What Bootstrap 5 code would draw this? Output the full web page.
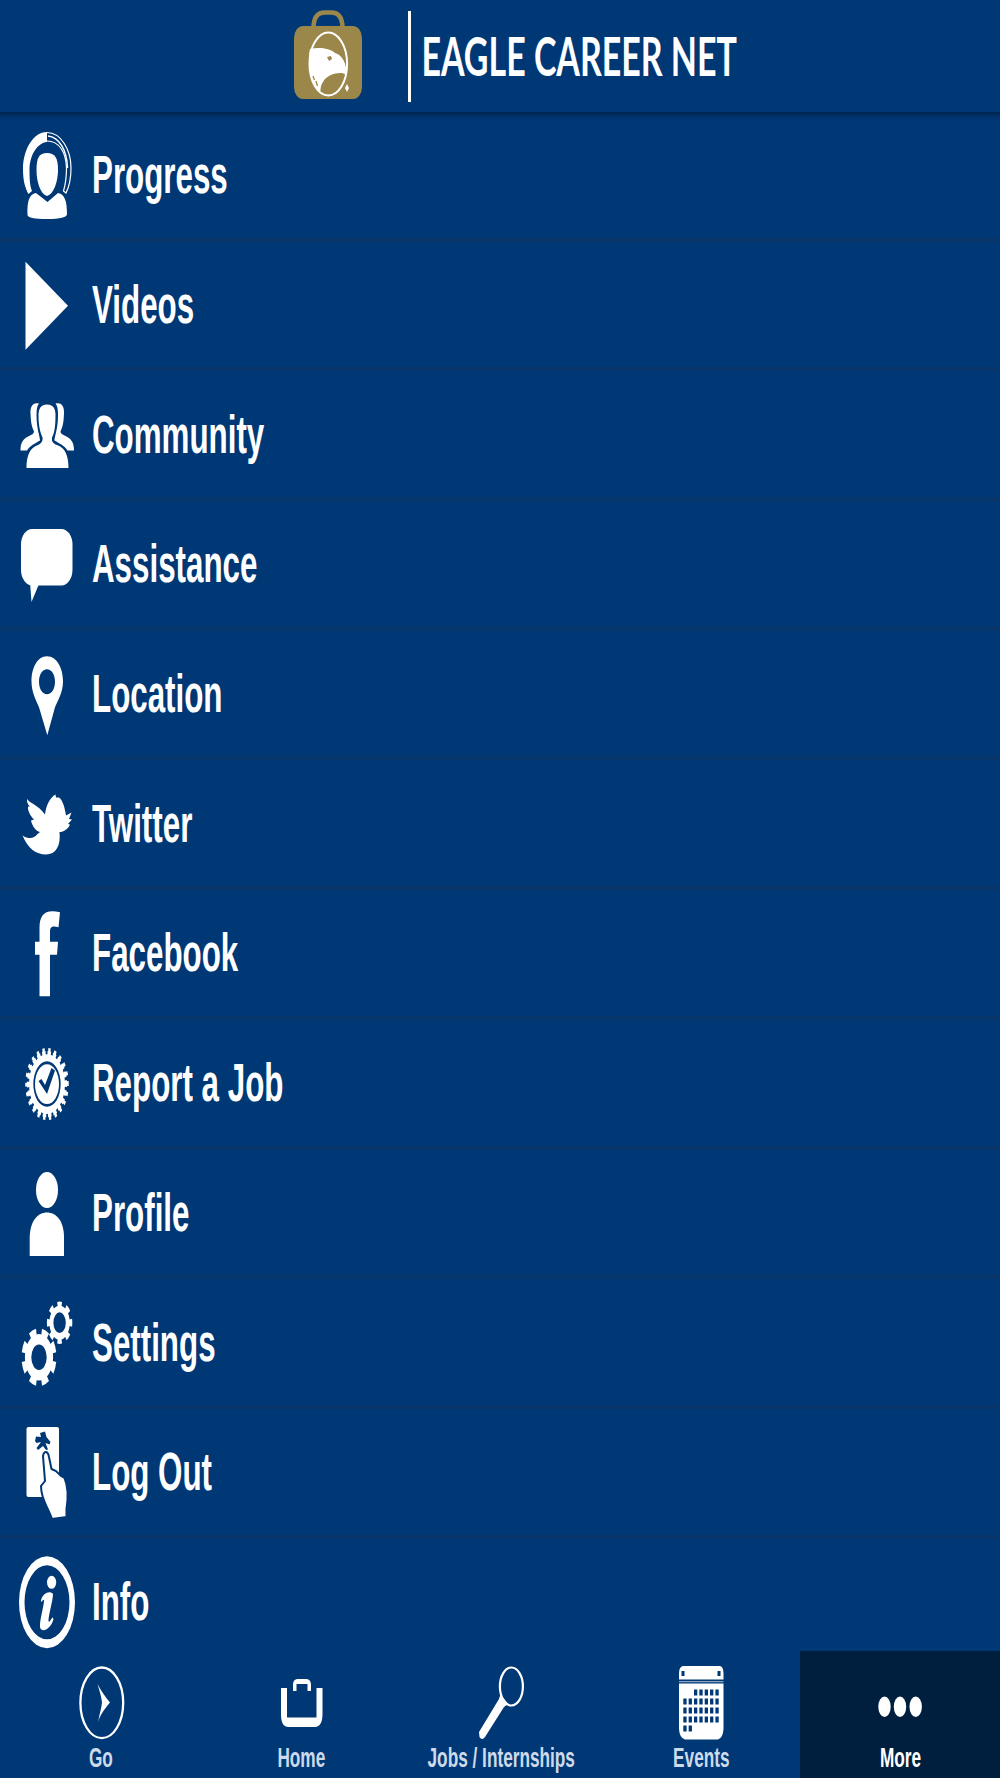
<!DOCTYPE html>
<html lang="en">
<head>
<meta charset="utf-8">
<meta name="viewport" content="width=device-width, initial-scale=1">
<title>Eagle Career Net</title>
<link href="https://cdn.jsdelivr.net/npm/bootstrap@5.3.0/dist/css/bootstrap.min.css" rel="stylesheet">
<style>
:root{--navy:#003876;--line:#08366b;--deep:#001f3f}
body{background:var(--navy);color:#fff;font-family:"Liberation Sans",Arial,sans-serif;font-weight:700}
svg{fill:#fff;flex:none;display:block}
.app-header{height:112px;padding-left:32px;background:var(--navy);box-shadow:0 1px 5px 2px #00234b;z-index:2}
.menu-row{height:129.7px;flex:none;padding:0 0 1px 16px;gap:15.5px;background:transparent;color:#fff;border:0 solid var(--line);border-radius:0}
.list-group .menu-row{border-width:0 0 4px}
.list-group .menu-row:last-child{border-width:0;padding-bottom:5px}
.menu-text{font-size:54px;line-height:1;white-space:nowrap;transform:scaleX(.58);transform-origin:left}
.tab-bar{height:127px;background:var(--navy);z-index:2}
.tab-bar .nav-link{width:200px;padding:8px 0 0;border-radius:0;color:#cddaea}
.tab-bar .nav-link.active{background:var(--deep);color:#fff}
.tab-text{font-size:28px;line-height:28px;padding:1px 0 0 3px;white-space:nowrap;transform:scaleX(.615)}
.active .tab-text{padding-left:0}
.ink{fill:var(--navy)}
.thin{fill:none;stroke:#fff}
</style>
</head>
<body>
<div class="vh-100 d-flex flex-column overflow-hidden">
<header class="app-header d-flex justify-content-center flex-shrink-0 position-relative">
<svg width="452" height="112" viewBox="290 0 452 112" role="img">
<path d="M313.500 28 C313.500 17 318 12.500 325 12.500 H331 C338 12.500 342.500 17 342.500 28" fill="none" stroke="#9c874b" stroke-width="4.500"/>
<rect x="294" y="26" width="68" height="73" rx="9" ry="12" fill="#9c874b"/>
<ellipse cx="328.300" cy="64" rx="18.800" ry="31.500" fill="none" stroke="#fff" stroke-width="2"/>
<path d="M310 49 C318 47 330 48 335 53 C342 55 347 63 346.500 75 L343.500 73.500 C337 72 327 75 323 82 C320 86 321 90 320 92 C311 84 307 62 310 49Z"/>
<path d="M327 57 l4-1 1 3 -3 2z" fill="#9c874b"/><path d="M313 76l1.500 4m1.500 1 1.500 5" stroke="#9c874b" stroke-width="1.300"/>
<path d="M347 84l2 4-2 4-2-4z"/>
<rect x="408" y="11" width="3" height="91"/>
<g transform="translate(421.500 76) scale(.72 1)"><text font-family="Lato, sans-serif" font-weight="700" font-size="53" textLength="438" lengthAdjust="spacingAndGlyphs">EAGLE CAREER NET</text></g>
</svg>
</header>
<main class="list-group flex-grow-1 overflow-hidden rounded-0" style="min-height:0">
<a class="menu-row list-group-item d-flex align-items-center"><svg width="60" height="124" viewBox="16 112 60 124">
<path d="M47 132 C33 132 23 150 23 169 C23 180 25 188 28.500 194 L32 191 C30 186 29.500 180 29.500 169 C30 155 37 143 47 142Z"/>
<path class="thin" stroke-width="1.200" d="M47 132.500 C61 132.500 71 150 71 168 C71 180 69 187 66 193 L63.500 191 C65 186 66.500 180 66.500 168 C66 152 59 141 47 141"/>
<path class="thin" stroke-width="1.500" d="M48 136 C59 137 67 150 67.500 168"/>
<path d="M47 153 C39 153 36.500 158 36.500 170 C36.500 181 40 194 47 196 C54 194 58 181 58 170 C58 158 55 153 47 153Z"/>
<path d="M36 193 C29 194 27 202 27.500 215 Q28 219 47 219 Q67 219 67 214 C67 202 65 194 58 193 L47.500 202Z"/></svg><span class="menu-text">Progress</span></a>
<a class="menu-row list-group-item d-flex align-items-center"><svg width="60" height="124" viewBox="16 241.700 60 124"><path d="M25.500 261.500 L68 305.500 L25.500 349.500Z"/></svg><span class="menu-text">Videos</span></a>
<a class="menu-row list-group-item d-flex align-items-center"><svg width="60" height="124" viewBox="16 371.400 60 124">
<path d="M47 404 C40 404 38.500 409 38.500 415 C38.500 428 41 433 42.500 437 C43 441 41 443 38 444.500 C30 447 26.500 455 26.500 467.500 H68.500 C68.500 455 65 447 57 444.500 C53 443 51.500 441 52 437 C54 433 55.500 428 55.500 415 C55.500 409 54 404 47 404"/>
<path id="side" d="M39 403 C33 401 30 406 30.500 413 C31 424 32 426 34 431 C34 433 32 434 30 435 C23 438 20.500 442 20.500 450 H27 C30 445 35 443 40 440 C40 436 36.500 428 36.500 415 C36.500 409 37 405 39 403Z"/><use href="#side" transform="matrix(-1 0 0 1 94.500 0)"/></svg><span class="menu-text">Community</span></a>
<a class="menu-row list-group-item d-flex align-items-center"><svg width="60" height="124" viewBox="16 501.100 60 124"><rect x="21" y="529" width="51.500" height="56.500" rx="11" ry="16"/><path d="M30 582 L31.500 602 L39 584Z"/></svg><span class="menu-text">Assistance</span></a>
<a class="menu-row list-group-item d-flex align-items-center"><svg width="60" height="124" viewBox="16 630.800 60 124"><path fill-rule="evenodd" d="M47 656 C37 656 31.500 668 31.500 681 C31.500 692 36 700 39 707 L47.300 735 L55 707 C58 700 63 692 63 681 C63 668 57 656 47 656Z M47 669 C51.500 669 55 674 55 681.500 S51.500 694 47 694 S39 689 39 681.500 S42.500 669 47 669Z"/></svg><span class="menu-text">Location</span></a>
<a class="menu-row list-group-item d-flex align-items-center"><svg width="60" height="124" viewBox="16 760.500 60 124"><path d="M27 798.500 C30 803 38 804 45 814 C46 805 50 797 55.500 794 L56 797 L59 797 C63 800 65 808 66 815 L71.500 812 L69 818.500 L72 819 L68 823.500 L70 824 C68 829 62 832 59.500 831.500 C61 845 56 854 46 854 C36 854 28 848 22.500 835 C29 839 34 838 37 834 L40 831.500 C36 831 32 825 31 820 L34 819 C30 815 27.500 810 28 806 L30 806 C27 803 27 801 27 798.500Z"/></svg><span class="menu-text">Twitter</span></a>
<a class="menu-row list-group-item d-flex align-items-center"><svg width="60" height="124" viewBox="16 890.200 60 124"><path d="M60 912.500 C45 909 39.500 915 39.500 928 V942 H35 V955 H39.500 V996.500 H50 V955 H57 L58 942 H50 V932 C50 926 53 926 58.500 927.500Z"/></svg><span class="menu-text">Facebook</span></a>
<a class="menu-row list-group-item d-flex align-items-center"><svg width="60" height="124" viewBox="16 1019.900 60 124"><g transform="translate(47 1084) scale(1 1.660)"><circle r="18"/><circle class="thin" r="18.500" stroke-width="3" pathLength="44" stroke-dasharray="1.300 .7" stroke-dashoffset=".65"/><circle class="thin" r="20" stroke-width="3.500" pathLength="44" stroke-dasharray=".8 1.200" stroke-dashoffset=".4"/><circle class="ink" r="13.700"/><circle r="12"/></g><path class="ink" d="M38.500 1081 L41.500 1079 L45 1085 L51.500 1068 L55 1070.500 L47 1094Z"/></svg><span class="menu-text">Report a Job</span></a>
<a class="menu-row list-group-item d-flex align-items-center"><svg width="60" height="124" viewBox="16 1149.600 60 124"><ellipse cx="47" cy="1189.500" rx="11" ry="18"/><path d="M29.700 1255.500 V1237 C30 1220 38 1212 47 1212 S64 1220 64 1237 V1255.500Z"/></svg><span class="menu-text">Profile</span></a>
<a class="menu-row list-group-item d-flex align-items-center"><svg width="60" height="124" viewBox="16 1279.300 60 124"><g class="thin" transform="translate(39 1356.500) scale(1 1.650)"><circle r="10.900" stroke-width="6.400"/><circle r="15.200" stroke-width="4.600" pathLength="16" stroke-dasharray="1.100 .9" stroke-dashoffset="-.45"/></g><g class="thin" transform="translate(59.600 1322) scale(1 1.670)"><circle r="8.200" stroke-width="4"/><circle r="11" stroke-width="3.400" pathLength="16" stroke-dasharray="1 1" stroke-dashoffset=".5"/></g></svg><span class="menu-text">Settings</span></a>
<a class="menu-row list-group-item d-flex align-items-center"><svg width="60" height="124" viewBox="16 1409 60 124"><rect x="26.500" y="1427" width="32.500" height="70" rx="2"/><path class="ink" d="M40 1433 L45 1431.500 L46.500 1437 L50.500 1442 L49.500 1444.500 L45.500 1443 L48 1449.500 L46 1450 L43 1446 L38 1450 L36.500 1448 L41 1442 L36.500 1443 L35 1441 L36 1436.500 L41 1437Z"/><path stroke="#003876" stroke-width="2" d="M43 1456 C44 1450 48 1451 49 1457 L51.500 1469 L56 1471 L61 1476 L64.500 1478 C68.500 1487 68 1499 66.500 1509 L66.500 1517 L52 1519 C48 1507 41 1500 41 1486 L45 1481Z"/></svg><span class="menu-text">Log Out</span></a>
<a class="menu-row list-group-item d-flex align-items-center"><svg width="60" height="124" viewBox="16 1538.700 60 124"><path fill-rule="evenodd" d="M47 1556 A28 46 0 0 1 47 1648 A28 46 0 0 1 47 1556Z M47 1565 A22.500 37 0 0 0 47 1639 A22.500 37 0 0 0 47 1565Z"/><ellipse cx="51.600" cy="1582" rx="4.600" ry="6.500"/><path d="M41 1600 C43 1592 50 1590 53 1593.500 C53 1600 49 1613 48.500 1620 C48.500 1623 50 1621 52.500 1617 L53.500 1619 C51 1628 44 1632 41 1629 C38 1626 43 1610 44 1601 C44 1598 43 1600 41 1602Z"/></svg><span class="menu-text">Info</span></a>
</main>
<nav class="tab-bar nav flex-nowrap flex-shrink-0 position-relative">
<a class="nav-link d-flex flex-column align-items-center"><svg width="60" height="84" viewBox="70.500 1659 60 84"><ellipse class="thin" cx="102.300" cy="1702.800" rx="21.400" ry="35.300" stroke-width="2.300"/><path d="M98 1684 C101 1690 106 1697 110.500 1702.500 C106 1708 101 1714 98.500 1722 C100 1714 102 1708 102.500 1702.500 C102 1697 100 1691 98 1684Z"/></svg><span class="tab-text">Go</span></a>
<a class="nav-link d-flex flex-column align-items-center"><svg width="60" height="84" viewBox="270 1659 60 84"><path d="M281 1688 H287 V1717.500 H316.500 V1688 H322.500 V1714 C322.500 1722 320 1727 315 1727 H288.500 C283 1727 281 1722 281 1714Z"/><path d="M293 1691 V1685 C293 1681 295 1679 298 1679 H306 C309 1679 311 1681 311 1685 V1691 H307.500 V1684 H296.500 V1691Z"/></svg><span class="tab-text">Home</span></a>
<a class="nav-link d-flex flex-column align-items-center"><svg width="60" height="84" viewBox="470 1659 60 84"><ellipse class="thin" cx="511.400" cy="1686.500" rx="11.500" ry="19" stroke-width="2.200"/><path d="M500.500 1694 L508 1704 L504 1707 L485 1737 Q482 1741 479.500 1737 L479 1732 L499 1699Z"/></svg><span class="tab-text">Jobs / Internships</span></a>
<a class="nav-link d-flex flex-column align-items-center"><svg width="60" height="84" viewBox="670 1659 60 84"><path d="M683 1666 H720 Q723.500 1667 723.500 1673 V1679.500 H679 V1673 Q679 1667 683 1666Z M679 1683.500 H723.500 V1729 Q723 1738 718 1739.500 H685 Q679.500 1738 679 1729Z"/><path d="M679 1681h44.500v1.200h-44.500z" opacity=".55"/><path class="ink" d="M681.500 1671h3v5h-3zM717.500 1671h3v5h-3z"/><g fill="none" stroke="#003876" stroke-width="6" stroke-dasharray="3.300 2.050"><path d="M694 1692.500H720"/><path d="M683.300 1701.500H720"/><path d="M683.300 1710.500H720"/><path d="M683.300 1719.500H720"/><path d="M683.300 1728.500H692"/></g></svg><span class="tab-text">Events</span></a>
<a class="nav-link active d-flex flex-column align-items-center"><svg width="60" height="84" viewBox="870 1659 60 84"><ellipse cx="884.500" cy="1706.700" rx="6.200" ry="10.200"/><ellipse cx="900" cy="1706.700" rx="6.200" ry="10.200"/><ellipse cx="915.700" cy="1706.700" rx="6.200" ry="10.200"/></svg><span class="tab-text">More</span></a>
</nav>
</div>
<script src="https://cdn.jsdelivr.net/npm/bootstrap@5.3.0/dist/js/bootstrap.bundle.min.js"></script>
</body>
</html>
